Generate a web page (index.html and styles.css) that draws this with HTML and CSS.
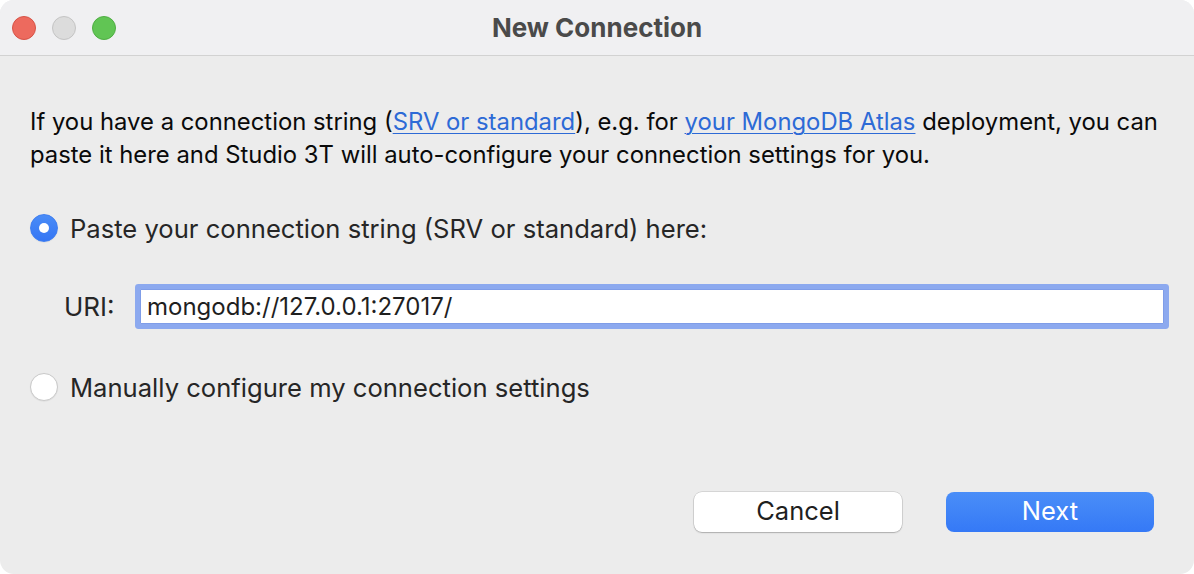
FILE: index.html
```html
<!DOCTYPE html>
<html>
<head>
<meta charset="utf-8">
<link rel="stylesheet" href="styles.css">
</head>
<body>
<div class="window">
  <div class="titlebar">
    <div class="lights">
      <span class="light red"></span>
      <span class="light grey"></span>
      <span class="light green"></span>
    </div>
    <div class="title">New Connection</div>
  </div>
  <div class="content">
    <p class="intro">If you have a connection string (<a href="#">SRV or standard</a>), e.g. for <a href="#">your MongoDB Atlas</a> deployment, you can<br>paste it here and Studio 3T will auto-configure your connection settings for you.</p>
    <div class="radio-row first">
      <span class="radio checked"></span>
      <span class="radio-label">Paste your connection string (SRV or standard) here:</span>
    </div>
    <div class="uri-row">
      <span class="uri-label">URI:</span>
      <div class="uri-input">mongodb://127.0.0.1:27017/</div>
    </div>
    <div class="radio-row">
      <span class="radio"></span>
      <span class="radio-label">Manually configure my connection settings</span>
    </div>
    <div class="buttons">
      <button class="btn cancel">Cancel</button>
      <button class="btn next">Next</button>
    </div>
  </div>
</div>
</body>
</html>
```

FILE: styles.css
```css
html, body {
  margin: 0;
  padding: 0;
  background: #ffffff;
}
body {
  width: 1194px;
  height: 574px;
  overflow: hidden;
  font-family: "Inter", "Liberation Sans", sans-serif;
}
.window {
  width: 1194px;
  height: 574px;
  border-radius: 14px;
  overflow: hidden;
  background: #ececec;
  display: flex;
  flex-direction: column;
}
.titlebar {
  height: 55px;
  flex: none;
  background: #f0f0f2;
  border-bottom: 1px solid #d2d2d2;
  display: flex;
  align-items: center;
  position: relative;
}
.lights {
  display: flex;
  gap: 16px;
  padding-left: 12px;
}
.light {
  width: 24px;
  height: 24px;
  border-radius: 50%;
  box-sizing: border-box;
}
.light.red { background: #ed6a5e; border: 1px solid #d65347; }
.light.grey { background: #dcdcdc; border: 1px solid #c4c4c4; }
.light.green { background: #61c554; border: 1px solid #4fae43; }
.title {
  position: absolute;
  left: 0;
  right: 0;
  text-align: center;
  font-weight: 700;
  font-size: 26px;
  color: #4a4a4a;
  pointer-events: none;
}
.content {
  flex: 1;
  display: flex;
  flex-direction: column;
  padding: 49px 40px 42px 30px;
}
.intro {
  margin: 0 -20px 0 0;
  font-size: 23.85px;
  line-height: 33px;
  color: #0a0a0a;
  white-space: nowrap;
}
.intro a {
  color: #2d6ad6;
  text-decoration: underline;
  text-underline-offset: 3px;
  text-decoration-thickness: 1px;
}
.radio-row {
  display: flex;
  align-items: center;
  gap: 12px;
  height: 34px;
}
.radio-row.first {
  margin-top: 40px;
  margin-bottom: 44px;
}
.radio {
  width: 28px;
  height: 28px;
  border-radius: 50%;
  box-sizing: border-box;
  background: #ffffff;
  border: 1px solid #c9c9c9;
  box-shadow: 0 0.5px 1px rgba(0,0,0,0.08);
  flex: none;
  position: relative;
}
.radio.checked {
  background: linear-gradient(#4a8cf7, #3576f4);
  border: 1px solid #3f7ef0;
}
.radio.checked::after {
  content: "";
  position: absolute;
  left: 50%;
  top: 50%;
  width: 10px;
  height: 10px;
  margin: -5px 0 0 -5px;
  border-radius: 50%;
  background: #ffffff;
}
.radio-label {
  font-size: 25.6px;
  color: #262626;
}
.uri-row {
  display: flex;
  align-items: center;
  margin-bottom: 46px;
  margin-right: -10px;
  padding-left: 34px;
}
.uri-label {
  width: 76px;
  flex: none;
  font-size: 26px;
  color: #262626;
}
.uri-input {
  flex: 1;
  height: 35px;
  box-sizing: border-box;
  background: #ffffff;
  border: 1px solid #7f9de8;
  border-radius: 1px;
  box-shadow: 0 0 0 5px #8ca9ef;
  font-size: 24px;
  line-height: 33px;
  padding-left: 6px;
  color: #1f1f1f;
}
.buttons {
  margin-top: auto;
  display: flex;
  justify-content: flex-end;
  gap: 44px;
}
.btn {
  width: 208px;
  height: 40px;
  border-radius: 8px;
  font-family: inherit;
  font-size: 25.5px;
  border: none;
  padding: 0 0 3px;
}
.btn.cancel {
  background: #ffffff;
  color: #1f1f1f;
  box-shadow: 0 0 0 0.5px rgba(0,0,0,0.18), 0 1px 1.5px rgba(0,0,0,0.2);
}
.btn.next {
  background: linear-gradient(#4a8ef8, #3579f6);
  color: #ffffff;
}
```
